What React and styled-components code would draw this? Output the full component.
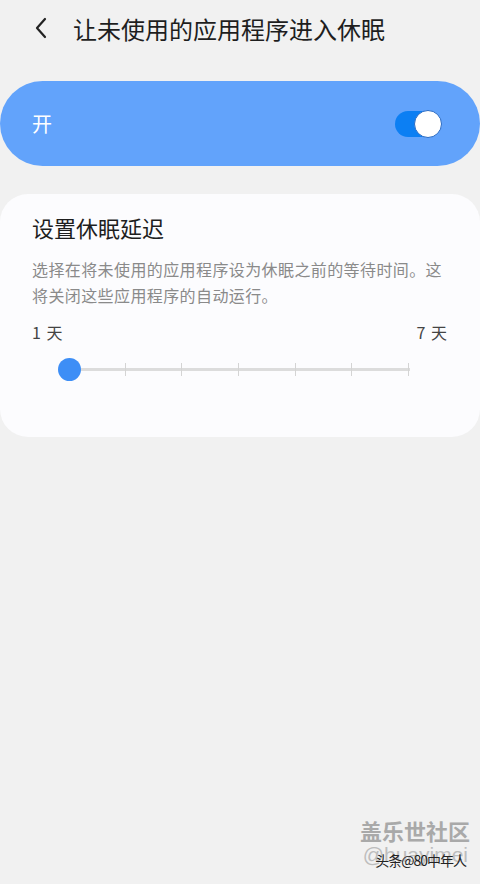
import React, { useState } from 'react';
import styled, { createGlobalStyle } from 'styled-components';

const GlobalStyle = createGlobalStyle`
  html, body {
    margin: 0;
    padding: 0;
    background: #f1f1f1;
  }
  body {
    font-family: "Noto Sans CJK SC", "Noto Sans", Roboto, sans-serif;
  }
`;

const Page = styled.div`
  width: 480px;
  height: 884px;
  background: #f1f1f1;
  display: flex;
  flex-direction: column;
  position: relative;
  overflow: hidden;
`;

const Header = styled.div`
  height: 56px;
  display: flex;
  align-items: center;
  padding-left: 31px;
  gap: 22px;
`;

const BackButton = styled.button`
  border: none;
  background: none;
  padding: 0;
  width: 20px;
  height: 24px;
  display: flex;
  align-items: center;
  justify-content: center;
`;

const Title = styled.h1`
  margin: 0;
  font-size: 24px;
  font-weight: 400;
  color: #1e1e1e;
`;

const MasterSwitch = styled.div`
  margin-top: 25px;
  height: 85px;
  border-radius: 43px;
  background: #62a3fb;
  display: flex;
  align-items: center;
  justify-content: space-between;
  padding: 0 43px 0 32px;
`;

const MasterLabel = styled.span`
  color: #fff;
  font-size: 20px;
`;

const Toggle = styled.div`
  position: relative;
  width: 42px;
  height: 26px;
  border-radius: 13px;
  background: ${(p) => (p.on ? '#0c7ff3' : '#b5b5b5')};
  cursor: pointer;
`;

const ToggleThumb = styled.span`
  position: absolute;
  top: -1px;
  left: ${(p) => (p.on ? '19px' : '-5px')};
  width: 26px;
  height: 26px;
  border-radius: 50%;
  background: #fff;
  border: 1.5px solid #2a6bc4;
`;

const Card = styled.section`
  margin-top: 28px;
  background: #fcfcfe;
  border-radius: 28px;
  padding: 18px 32px 0 32px;
  height: 243px;
  box-sizing: border-box;
`;

const CardTitle = styled.h2`
  margin: 0;
  font-size: 22px;
  font-weight: 400;
  color: #1e1e1e;
  line-height: 30px;
`;

const Description = styled.p`
  margin: 14px 0 0;
  font-size: 16px;
  line-height: 26px;
  color: #8a8a8a;
  letter-spacing: 0.4px;
`;

const RangeLabels = styled.div`
  margin-top: 12px;
  display: flex;
  justify-content: space-between;
  font-size: 16px;
  color: #444;
  letter-spacing: 1px;
`;

const SliderArea = styled.div`
  position: relative;
  margin: 14px 38px 0 26px;
  height: 24px;
`;

const Track = styled.div`
  position: absolute;
  left: 11px;
  right: 0;
  top: 10px;
  height: 3px;
  background: #dcdcdc;
`;

const Tick = styled.span`
  position: absolute;
  top: 5px;
  width: 1px;
  height: 13px;
  background: #d4d4d4;
`;

const Thumb = styled.span`
  position: absolute;
  top: 0;
  width: 23px;
  height: 23px;
  border-radius: 50%;
  background: #3d8ef6;
`;

const Watermark = styled.div`
  position: absolute;
  right: 10px;
  bottom: 18px;
  display: flex;
  flex-direction: column;
  align-items: flex-end;
`;

const WatermarkBrand = styled.span`
  font-size: 22px;
  font-weight: 700;
  color: #a9a9a9;
  line-height: 28px;
`;

const WatermarkHandle = styled.span`
  font-family: "Liberation Sans", Arial, sans-serif;
  font-size: 21px;
  color: #bdbdbd;
  line-height: 22px;
  margin-right: 2px;
`;

const WatermarkOverlay = styled.span`
  position: absolute;
  right: 4px;
  bottom: -4px;
  font-size: 14px;
  color: #222;
  letter-spacing: -1px;
`;

const ticks = [1, 2, 3, 4, 5, 6];

export default function App() {
  const [on, setOn] = useState(true);
  const [days] = useState(1);
  const width = 340;

  return (
    <Page>
      <GlobalStyle />
      <Header>
        <BackButton>
          <svg width="14" height="22" viewBox="0 0 14 22" fill="none">
            <path d="M11 2 L3 11 L11 20" stroke="#222" strokeWidth="2.2" strokeLinecap="round" strokeLinejoin="round" />
          </svg>
        </BackButton>
        <Title>让未使用的应用程序进入休眠</Title>
      </Header>

      <MasterSwitch>
        <MasterLabel>开</MasterLabel>
        <Toggle on={on} onClick={() => setOn(!on)}>
          <ToggleThumb on={on} />
        </Toggle>
      </MasterSwitch>

      <Card>
        <CardTitle>设置休眠延迟</CardTitle>
        <Description>
          选择在将未使用的应用程序设为休眠之前的等待时间。这将关闭这些应用程序的自动运行。
        </Description>
        <RangeLabels>
          <span>1 天</span>
          <span>7 天</span>
        </RangeLabels>
        <SliderArea>
          <Track />
          {ticks.map((t) => (
            <Tick key={t} style={{ left: 11 + (t * width) / 6 - 1 }} />
          ))}
          <Thumb style={{ left: ((days - 1) * width) / 6 }} />
        </SliderArea>
      </Card>

      <Watermark>
        <WatermarkBrand>盖乐世社区</WatermarkBrand>
        <WatermarkHandle>@huayimei</WatermarkHandle>
        <WatermarkOverlay>头条@80中年人</WatermarkOverlay>
      </Watermark>
    </Page>
  );
}
